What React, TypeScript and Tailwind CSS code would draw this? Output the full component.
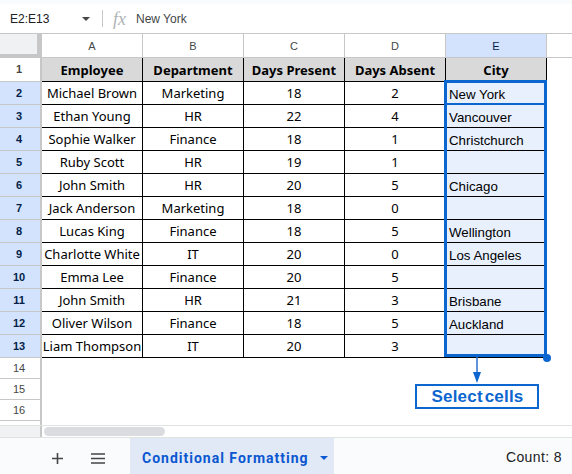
const rows = [
  ["Michael Brown", "Marketing", "18", "2", "New York"],
  ["Ethan Young", "HR", "22", "4", "Vancouver"],
  ["Sophie Walker", "Finance", "18", "1", "Christchurch"],
  ["Ruby Scott", "HR", "19", "1", ""],
  ["John Smith", "HR", "20", "5", "Chicago"],
  ["Jack Anderson", "Marketing", "18", "0", ""],
  ["Lucas King", "Finance", "18", "5", "Wellington"],
  ["Charlotte White", "IT", "20", "0", "Los Angeles"],
  ["Emma Lee", "Finance", "20", "5", ""],
  ["John Smith", "HR", "21", "3", "Brisbane"],
  ["Oliver Wilson", "Finance", "18", "5", "Auckland"],
  ["Liam Thompson", "IT", "20", "3", ""],
];
const heads = ["Employee", "Department", "Days Present", "Days Absent", "City"];
const cols = ["A", "B", "C", "D"];

export default function App() {
  return (
    <div className="w-[572px] h-[474px] overflow-hidden bg-white flex flex-col font-['Liberation_Sans',sans-serif] text-[#202124]">
      <div className="h-[4px] bg-[#f9fbfd]" />
      {/* formula bar */}
      <div className="h-[29px] flex items-center">
        <span className="w-[82px] pl-[10px] text-[12px]">E2:E13</span>
        <span className="w-0 h-0 border-x-[4px] border-x-transparent border-t-[4px] border-t-[#444746]" />
        <span className="w-px h-[17px] bg-[#c7c7c7] ml-[12px]" />
        <span className="ml-[10px] w-[16px] text-[18px] leading-none italic text-[#b0b3b6] font-['Liberation_Serif',serif]">fx</span>
        <span className="ml-[7px] text-[12px] text-[#444746]">New York</span>
      </div>

      {/* sheet */}
      <div className="relative h-[392px] border-t border-[#c7c7c7]">
        <div className="grid grid-cols-[42px_101px_101px_101px_101px_101px_1fr] grid-rows-[24px_24px_repeat(12,23px)_repeat(3,21px)_4px]">
          <div className="bg-[#f0f1f2] border-r-[5px] border-b-[4px] border-[#c7c7c7]" />
          {cols.map((c) => (
            <div key={c} className="flex items-center justify-center pt-[1px] text-[11px] text-[#444746] border-r border-b border-[#c7c7c7]">{c}</div>
          ))}
          <div className="flex items-center justify-center pt-[1px] text-[11px] text-[#041e49] bg-[#d3e3fd] border-r border-b border-[#c7c7c7]">E</div>
          <div className="border-b border-[#c7c7c7]" />

          <div className="flex items-center justify-center pr-[2px] text-[11px] font-bold text-[#444746] border-r-2 border-b border-[#c7c7c7]">1</div>
          {heads.map((h) => (
            <div key={h} className="flex items-center justify-center pt-[2px] bg-[#d9d9d9] text-[13px] font-bold text-black border-r border-b border-black font-['Noto_Sans',sans-serif]">{h}</div>
          ))}
          <div />

          {rows.map((r, i) => (
            <div key={i} className="contents">
              <div className="flex items-center justify-center pr-[2px] text-[11px] font-bold text-[#041e49] bg-[#d3e3fd] border-r-2 border-b border-[#c7c7c7]">{i + 2}</div>
              {r.slice(0, 4).map((v, j) => (
                <div key={j} className="flex items-center justify-center pt-[2px] whitespace-nowrap text-[13px] text-black border-r border-b border-black font-['Noto_Sans',sans-serif]">{v}</div>
              ))}
              <div className="flex items-end pl-[3px] bg-[#e8f0fe] text-[13.3px] leading-[18px] text-black border-r border-b border-black">{r[4]}</div>
              <div />
            </div>
          ))}

          {[14, 15, 16].map((n) => (
            <div key={n} className="contents">
              <div className="flex items-center justify-center pr-[2px] text-[11px] text-[#444746] border-r-2 border-b border-[#c7c7c7]">{n}</div>
              <div className="col-span-6" />
            </div>
          ))}
          <div className="border-r-2 border-[#c7c7c7]" />
        </div>

        {/* selection box */}
        <div className="absolute left-[444px] top-[46px] w-[103px] h-[277px] border-[3px] border-[#0b66d0]" />
        <div className="absolute left-[444px] top-[69px] w-[103px] h-[2px] bg-[#0b66d0]" />
        <div className="absolute left-[543px] top-[320px] w-[8px] h-[8px] rounded-full bg-[#0b66d0]" />

        {/* callout */}
        <div className="absolute left-[415px] top-[323px] w-[124px] flex flex-col items-center">
          <svg width="10" height="27" viewBox="0 0 10 27" className="block">
            <path d="M5 0V18" stroke="#2a6fd0" strokeWidth="1.5" />
            <path d="M1 15H9L5 26Z" fill="#0b66d0" />
          </svg>
          <div className="w-[124px] h-[25px] flex items-center justify-center pl-[1px] border-[2px] border-[#0b66d0] bg-white text-[17px] font-bold text-[#0b66d0] tracking-[0.2px] [word-spacing:-3px]">Select cells</div>
        </div>
      </div>

      {/* scrollbar */}
      <div className="h-[13px] flex border-y border-[#e1e3e1] bg-white">
        <div className="w-[42px] bg-[#f0f1f2] border-r-2 border-[#c7c7c7]" />
        <div className="ml-[2px] mt-[1px] w-[121px] h-[9px] rounded-full bg-[#dadce0]" />
      </div>

      {/* tabs */}
      <div className="flex-1 flex bg-[#f9fbfd] items-stretch">
        <div className="w-[130px] flex items-center pt-[4px] pl-[52px] gap-[28px]">
          <svg width="11" height="11" viewBox="0 0 11 11"><path d="M5.5 0v11M0 5.5h11" stroke="#444746" strokeWidth="1.6" /></svg>
          <svg width="14" height="11" viewBox="0 0 14 11"><path d="M0 1h14M0 5.5h14M0 10h14" stroke="#444746" strokeWidth="1.5" /></svg>
        </div>
        <div className="w-[204px] bg-[#e1e9f7] flex items-center pt-[4px] pl-[12px] gap-[11px] text-[14px] font-bold tracking-[1px] text-[#0b57d0] font-['Roboto',sans-serif]">
          Conditional Formatting
          <span className="w-0 h-0 border-x-[4px] border-x-transparent border-t-[4px] border-t-[#0b57d0]" />
        </div>
        <div className="flex-1 flex items-center justify-end pt-[2px] pr-[10px] text-[14px] tracking-[0.4px]">Count: 8</div>
      </div>
    </div>
  );
}
